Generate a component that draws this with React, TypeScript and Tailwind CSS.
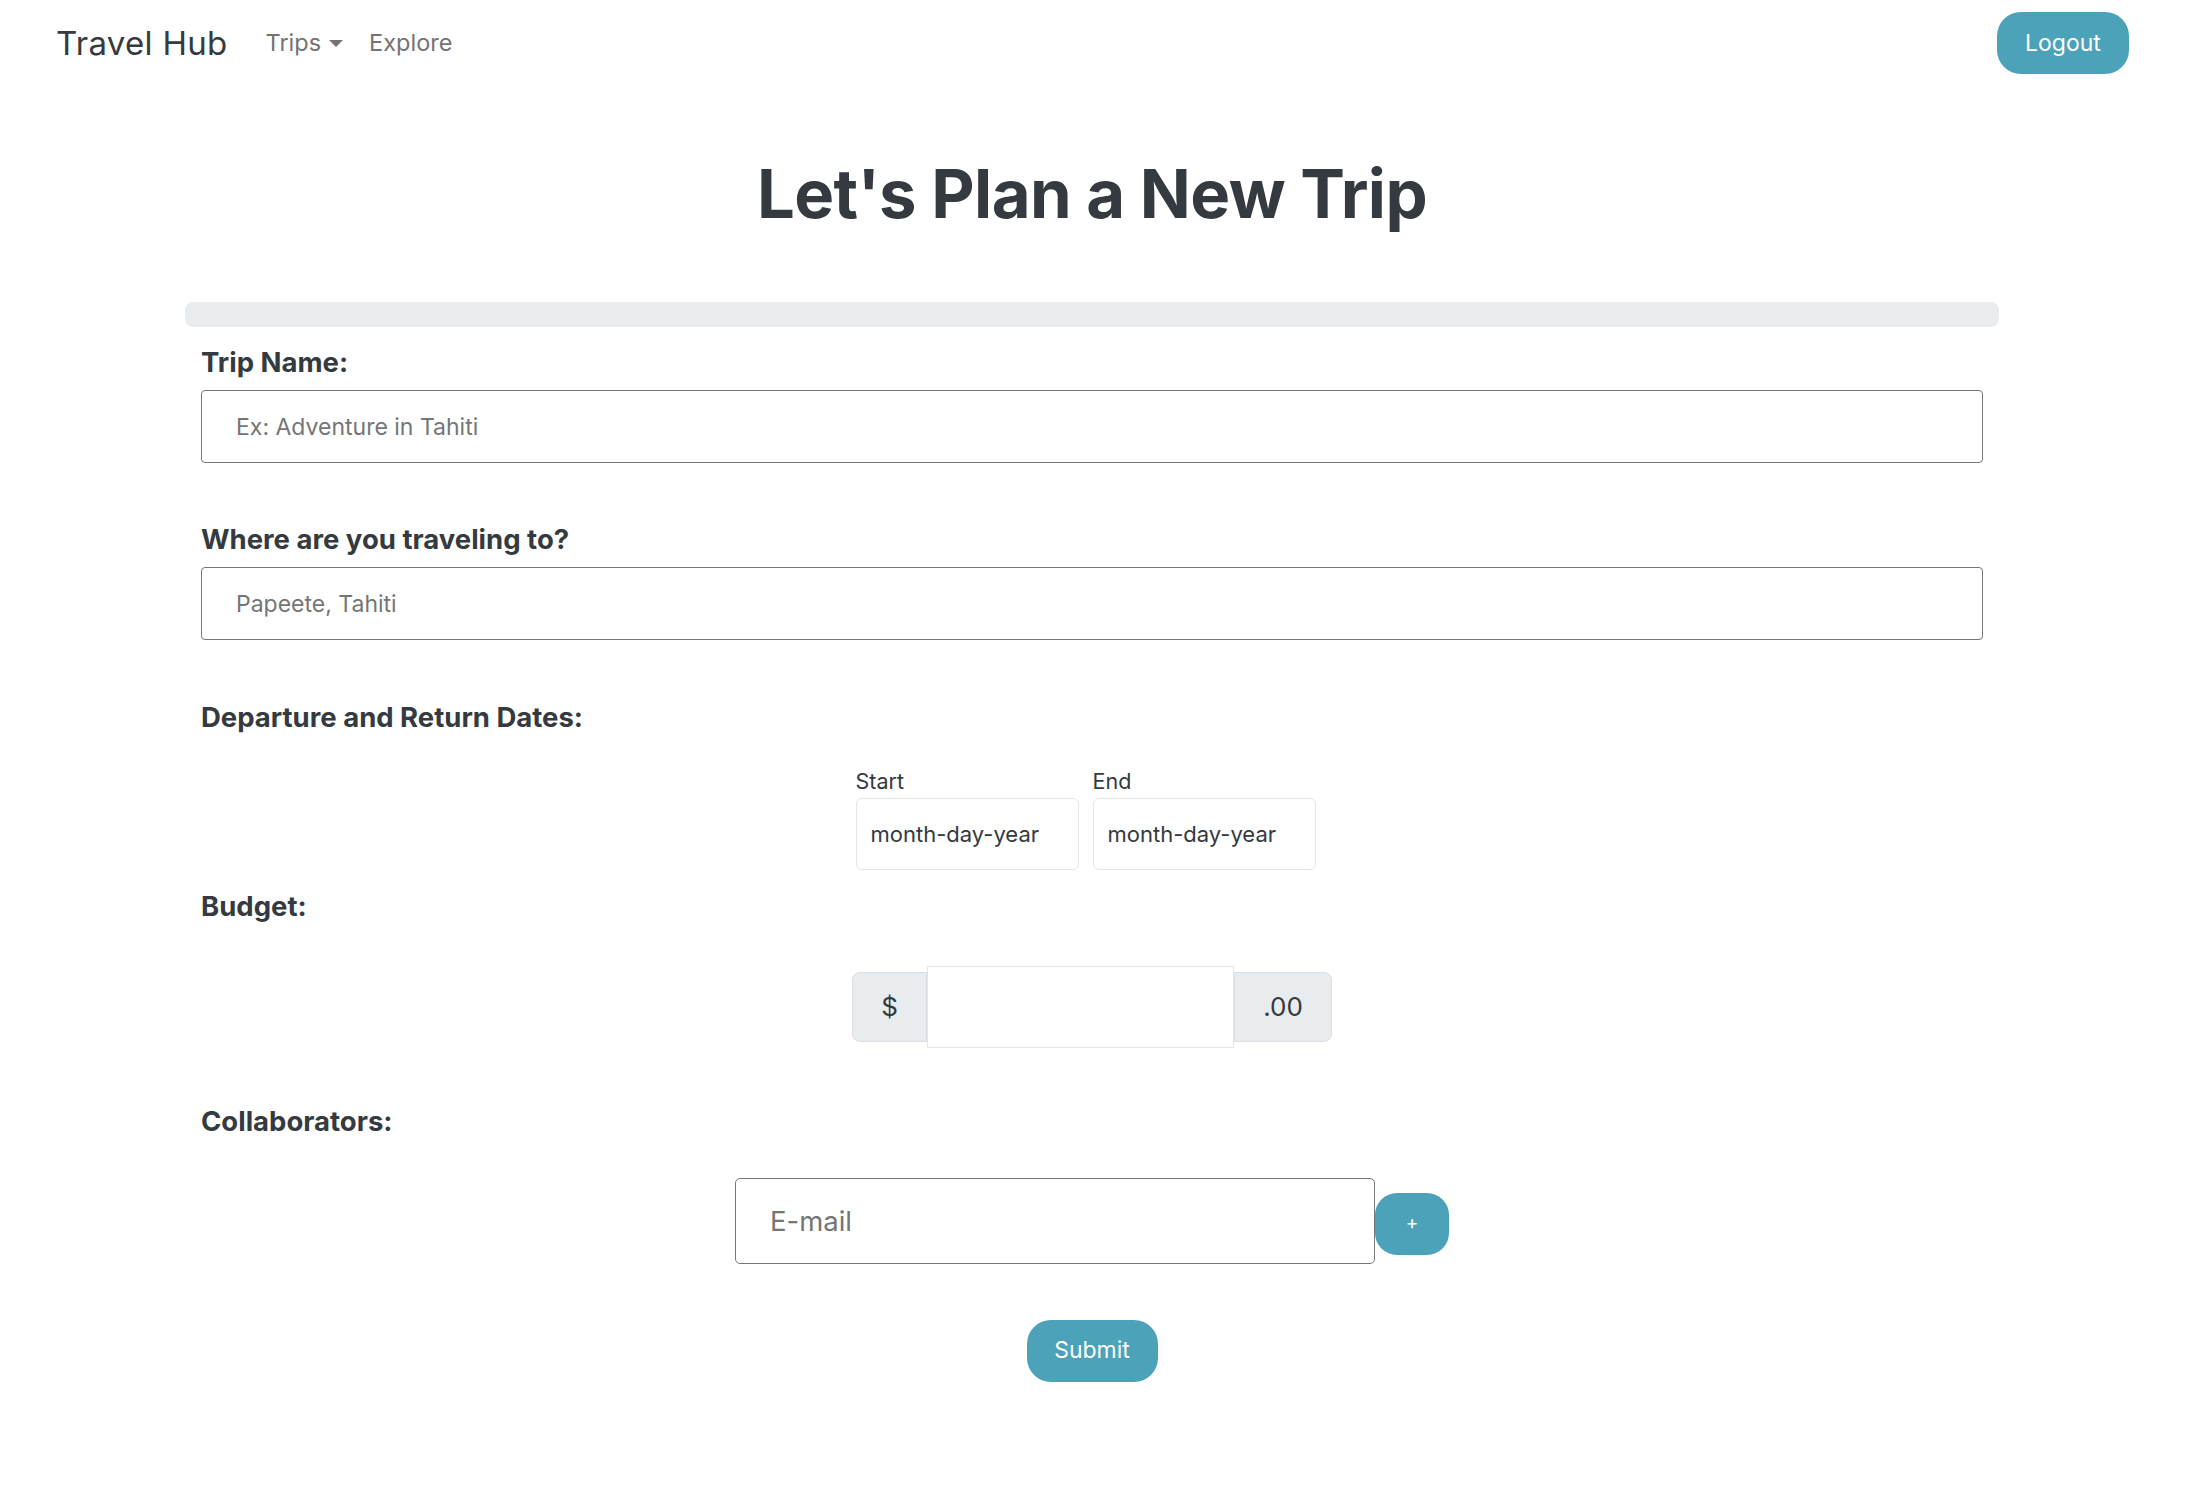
import React from "react";

const label = "block text-[27.5px] leading-[1.2] font-bold text-[#343a40]";
const bigInput =
  "block w-full h-[73px] rounded-[4px] border border-[#767676] bg-white px-[34px] text-[23px] text-[#343a40] placeholder:text-[#757575] outline-none";

function NavBar() {
  return (
    <nav className="flex h-[86px] items-center pl-[56px] pr-[55px]">
      <a className="text-[33px] leading-none text-[#343a40] tracking-[0.3px]">Travel Hub</a>
      <div className="ml-[38px] flex items-center gap-[26px] text-[23.5px] text-[#737373]">
        <a className="flex items-center gap-[8px]">
          Trips
          <span className="mt-[1px] h-0 w-0 border-x-[7px] border-t-[7px] border-x-transparent border-t-[#737373]" />
        </a>
        <a>Explore</a>
      </div>
      <button className="ml-auto h-[62px] w-[132px] rounded-[24px] bg-[#4ca2b8] text-[23px] text-white">
        Logout
      </button>
    </nav>
  );
}

export default function App() {
  return (
    <div className="min-h-screen w-[2184px] bg-white font-['Inter','Noto_Sans',sans-serif] text-[#343a40]">
      <NavBar />

      <h1 className="mt-[68px] text-center text-[67px] leading-[1.2] font-bold tracking-[-0.6px] text-[#343a40]">
        Let's Plan a New Trip
      </h1>

      <div className="mx-auto mt-[68px] w-[1814px]">
        {/* top bar */}
        <div className="h-[25px] w-full rounded-lg bg-[#e9ecef]" />

        <form className="px-[16px] pb-[100px]" onSubmit={(e) => e.preventDefault()}>
          <label className={`${label} mt-[19px]`}>Trip Name:</label>
          <input className={`${bigInput} mt-[11px]`} placeholder="Ex: Adventure in Tahiti" />

          <label className={`${label} mt-[60px]`}>Where are you traveling to?</label>
          <input className={`${bigInput} mt-[11px]`} placeholder="Papeete, Tahiti" />

          <label className={`${label} mt-[61px]`}>Departure and Return Dates:</label>
          <div className="mt-[31px] flex justify-center">
            <div className="mr-[13px] flex gap-[14px]">
              {["Start", "End"].map((l) => (
                <div key={l} className="flex flex-col">
                  <span className="text-[21.5px] leading-[1.5] text-[#343a40]">{l}</span>
                  <input
                    className="h-[72px] w-[223px] rounded-[6px] border border-[#e3e5e8] px-[14px] text-[22px] text-[#343a40] placeholder:text-[#343a40] outline-none"
                    placeholder="month-day-year"
                  />
                </div>
              ))}
            </div>
          </div>

          <label className={`${label} mt-[20px]`}>Budget:</label>
          <div className="mt-[43px] flex items-center justify-center">
            <span className="flex h-[70px] w-[75px] items-center justify-center rounded-l-lg border border-[#dadde1] bg-[#e9ecef] text-[26px] text-[#343a40]">
              $
            </span>
            <input className="h-[82px] w-[307px] border border-[#e3e5e8] bg-white outline-none" />
            <span className="flex h-[70px] w-[98px] items-center justify-center rounded-r-lg border border-[#dadde1] bg-[#e9ecef] text-[26px] text-[#343a40]">
              .00
            </span>
          </div>

          <label className={`${label} mt-[57px]`}>Collaborators:</label>
          <div className="mt-[40px] flex items-center justify-center">
            <input
              className="h-[86px] w-[640px] rounded-[5px] border border-[#767676] px-[34px] text-[27.5px] text-[#343a40] placeholder:text-[#757575] outline-none"
              placeholder="E-mail"
            />
            <button type="button" className="mt-[6px] h-[62px] w-[74px] rounded-[22px] bg-[#4ca2b8] text-[19px] text-white">
              +
            </button>
          </div>

          <div className="mt-[56px] flex justify-center">
            <button type="submit" className="h-[62px] w-[131px] rounded-[24px] bg-[#4ca2b8] text-[23px] text-white">
              Submit
            </button>
          </div>
        </form>
      </div>
    </div>
  );
}
